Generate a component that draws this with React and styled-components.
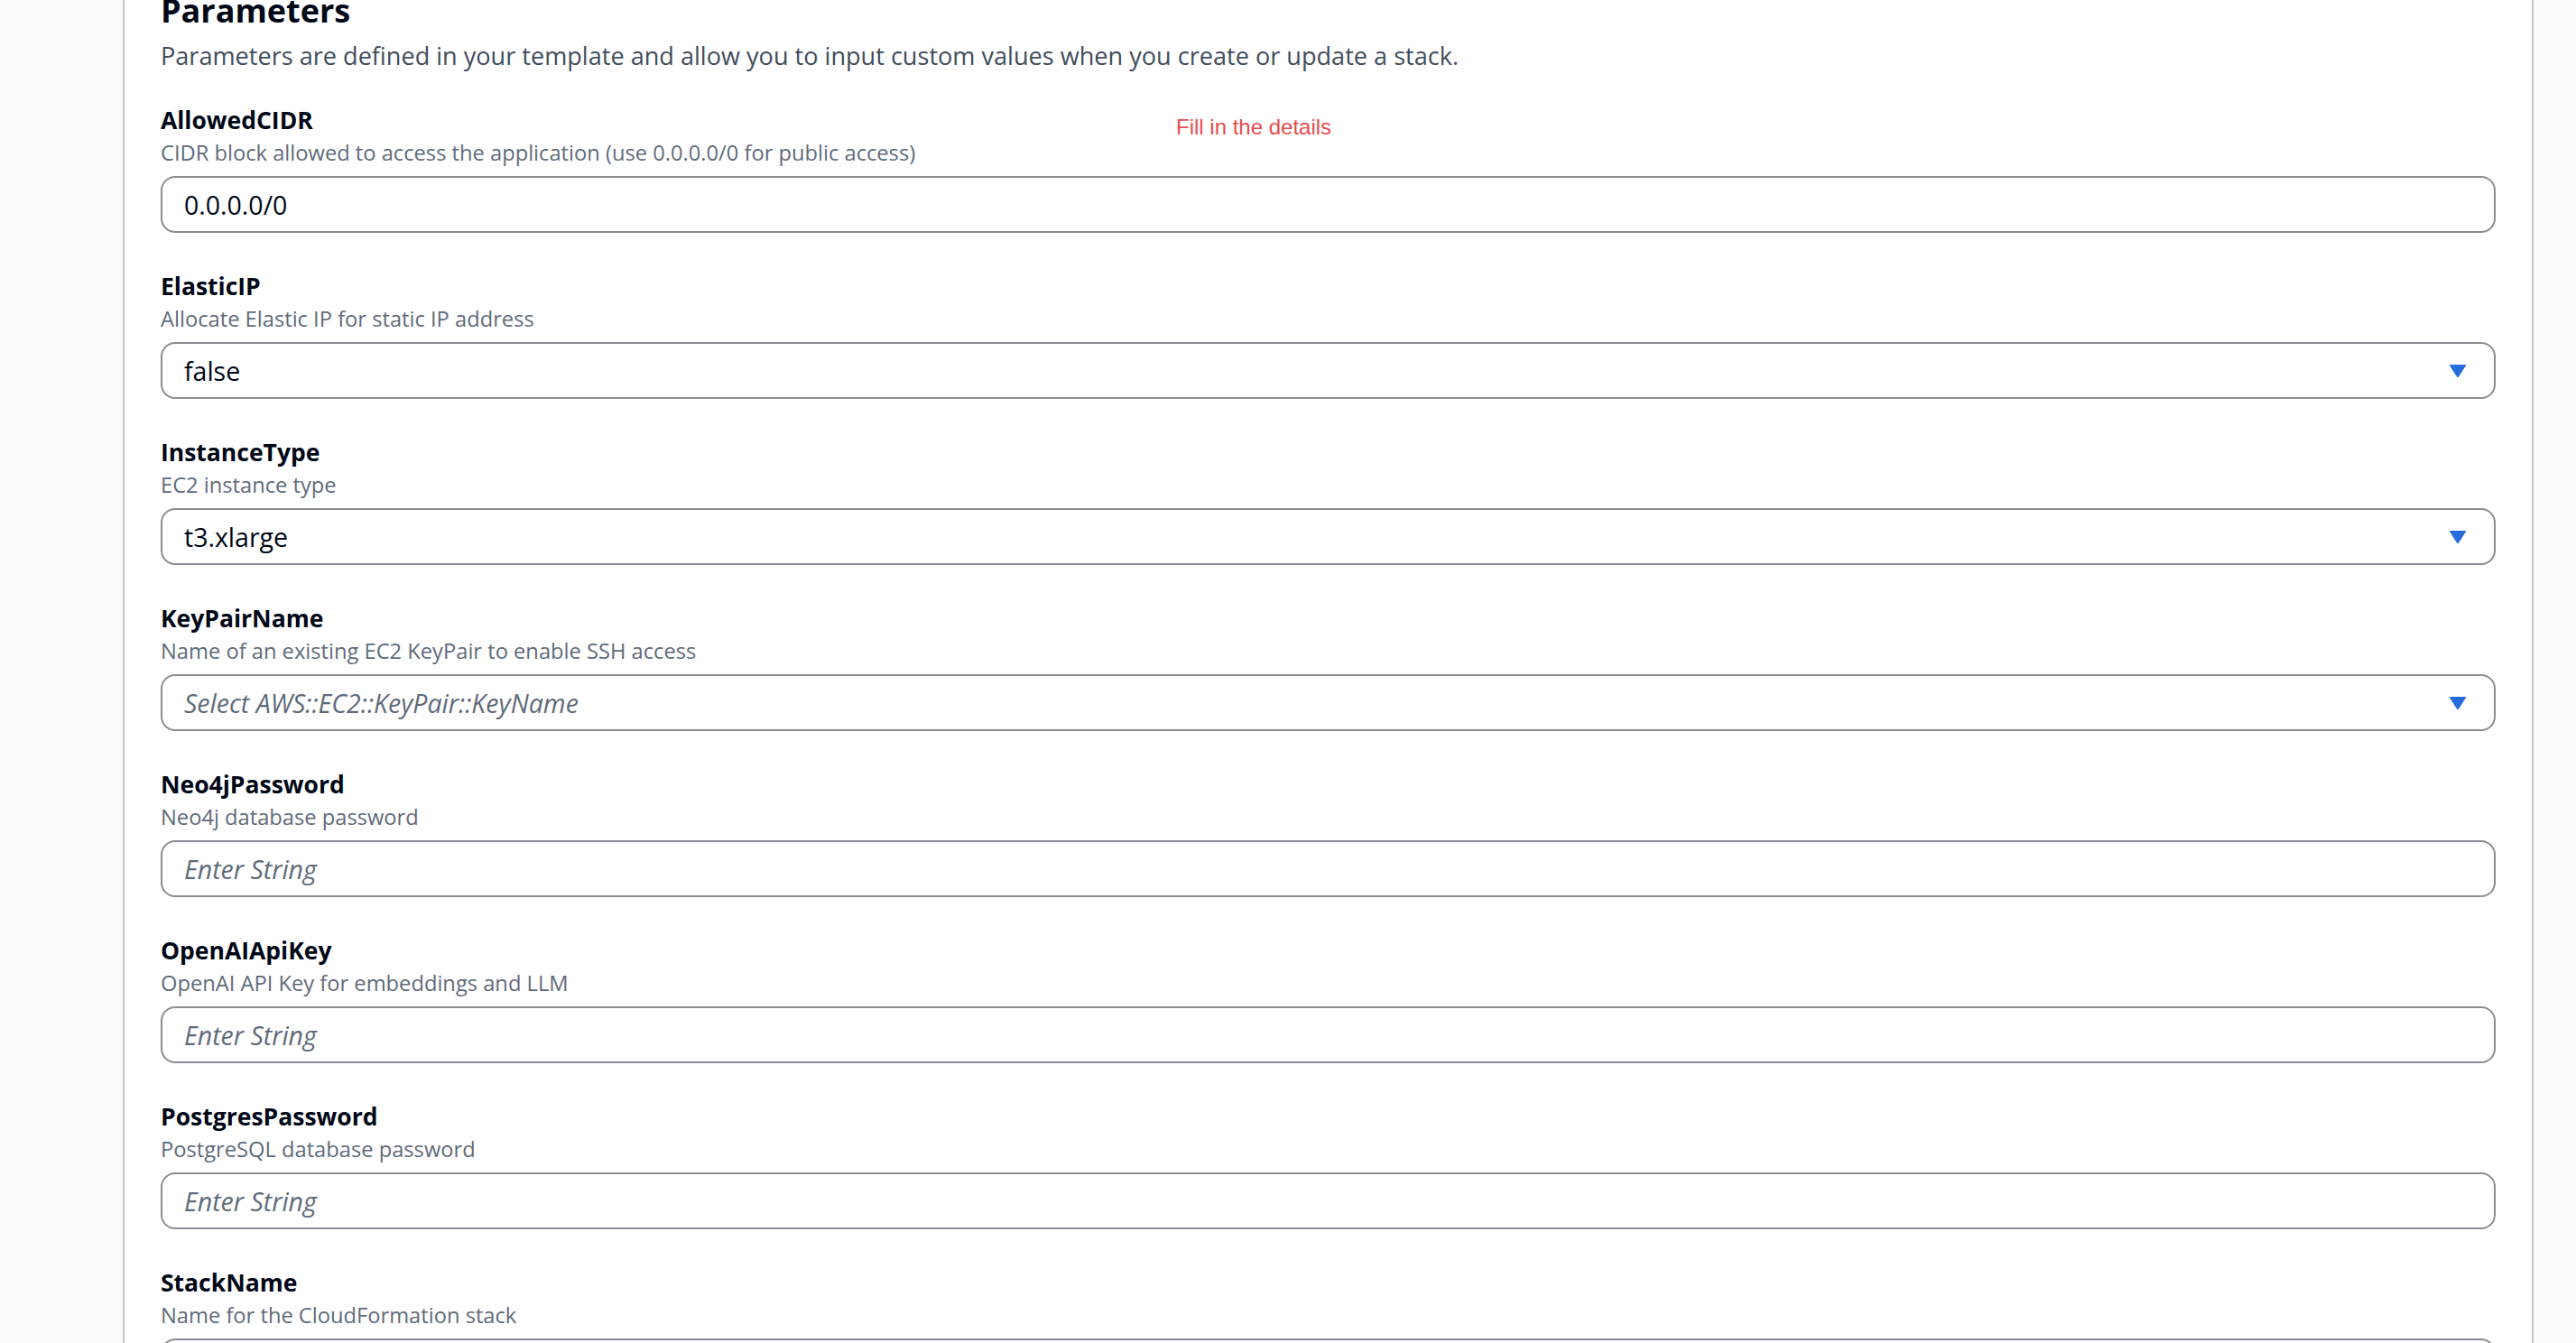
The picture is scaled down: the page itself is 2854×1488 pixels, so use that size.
import React from 'react';
import styled, { createGlobalStyle } from 'styled-components';

const GlobalStyle = createGlobalStyle`
    html, body {
        margin: 0;
        padding: 0;
        background: #fafafa;
        overflow: hidden;
    }
    body {
        font-family: "Open Sans", Lato, sans-serif;
        color: #000716;
    }
`;

// Parameter list, in the order shown in the console
const parameters = [
    { name: 'AllowedCIDR', description: 'CIDR block allowed to access the application (use 0.0.0.0/0 for public access)', kind: 'text', value: '0.0.0.0/0' },
    { name: 'ElasticIP', description: 'Allocate Elastic IP for static IP address', kind: 'select', value: 'false' },
    { name: 'InstanceType', description: 'EC2 instance type', kind: 'select', value: 't3.xlarge' },
    { name: 'KeyPairName', description: 'Name of an existing EC2 KeyPair to enable SSH access', kind: 'select', placeholder: 'Select AWS::EC2::KeyPair::KeyName' },
    { name: 'Neo4jPassword', description: 'Neo4j database password', kind: 'text', placeholder: 'Enter String' },
    { name: 'OpenAIApiKey', description: 'OpenAI API Key for embeddings and LLM', kind: 'text', placeholder: 'Enter String' },
    { name: 'PostgresPassword', description: 'PostgreSQL database password', kind: 'text', placeholder: 'Enter String' },
    { name: 'StackName', description: 'Name for the CloudFormation stack', kind: 'text', placeholder: 'Enter String' },
];

const Caret = () => (
    <svg width="20" height="16" viewBox="0 0 20 16">
        <path d="M1.5 1 L18.5 1 Q19.6 1 19 2 L11 14.6 Q10 16 9 14.6 L1 2 Q0.4 1 1.5 1 Z" fill="#266ddb" />
    </svg>
);

const Field = ({ name, description, kind, value, placeholder }) => (
    <FieldRoot>
        <Label>{name}</Label>
        <Description>{description}</Description>
        <InputBox>
            <InputText isPlaceholder={!value}>{value || placeholder}</InputText>
            {kind === 'select' && <Caret />}
        </InputBox>
    </FieldRoot>
);

export default function App() {
    return (
        <>
            <GlobalStyle />
            <Page>
                <Panel>
                    <Note>Fill in the details</Note>
                    <Header>
                        <Heading>Parameters</Heading>
                        <Intro>Parameters are defined in your template and allow you to input custom values when you create or update a stack.</Intro>
                    </Header>
                    <FieldList>
                        {parameters.map(p => <Field key={p.name} {...p} />)}
                    </FieldList>
                </Panel>
            </Page>
        </>
    );
}

const Page = styled.div`
    display: flex;
    height: 1488px;
    overflow: hidden;
    padding-left: 136px;
    padding-right: 47px;
`;

const Panel = styled.main`
    position: relative;
    flex: 1;
    background: #ffffff;
    border-left: 2px solid #c6c6cd;
    border-right: 2px solid #c6c6cd;
    padding: 0 40px;
`;

const Note = styled.span`
    position: absolute;
    left: 1165px;
    top: 127px;
    font-family: "Liberation Sans", Arial, sans-serif;
    font-size: 24px;
    color: #ea4b4e;
`;

const Header = styled.header`
    display: flex;
    flex-direction: column;
    margin-top: -10px;
    margin-bottom: 35px;
`;

const Heading = styled.h2`
    margin: 0 0 10px 0;
    font-size: 36px;
    line-height: 44px;
    font-weight: 700;
`;

const Intro = styled.p`
    margin: 0;
    font-size: 27.1px;
    line-height: 36px;
    color: #414d5c;
`;

const FieldList = styled.div`
    display: flex;
    flex-direction: column;
    gap: 41px;
`;

const FieldRoot = styled.div`
    display: flex;
    flex-direction: column;
`;

const Label = styled.div`
    font-size: 26.5px;
    line-height: 36px;
    font-weight: 700;
`;

const Description = styled.div`
    font-size: 23.7px;
    line-height: 36px;
    color: #5f6b7a;
    margin-bottom: 8px;
`;

const InputBox = styled.div`
    display: flex;
    align-items: center;
    justify-content: space-between;
    height: 63px;
    box-sizing: border-box;
    border: 2px solid #8c8c94;
    border-radius: 16px;
    padding: 0 30px 0 24px;
`;

const InputText = styled.span`
    font-size: 28.5px;
    color: ${props => props.isPlaceholder ? '#5f6b7a' : '#000716'};
    font-style: ${props => props.isPlaceholder ? 'italic' : 'normal'};
`;
